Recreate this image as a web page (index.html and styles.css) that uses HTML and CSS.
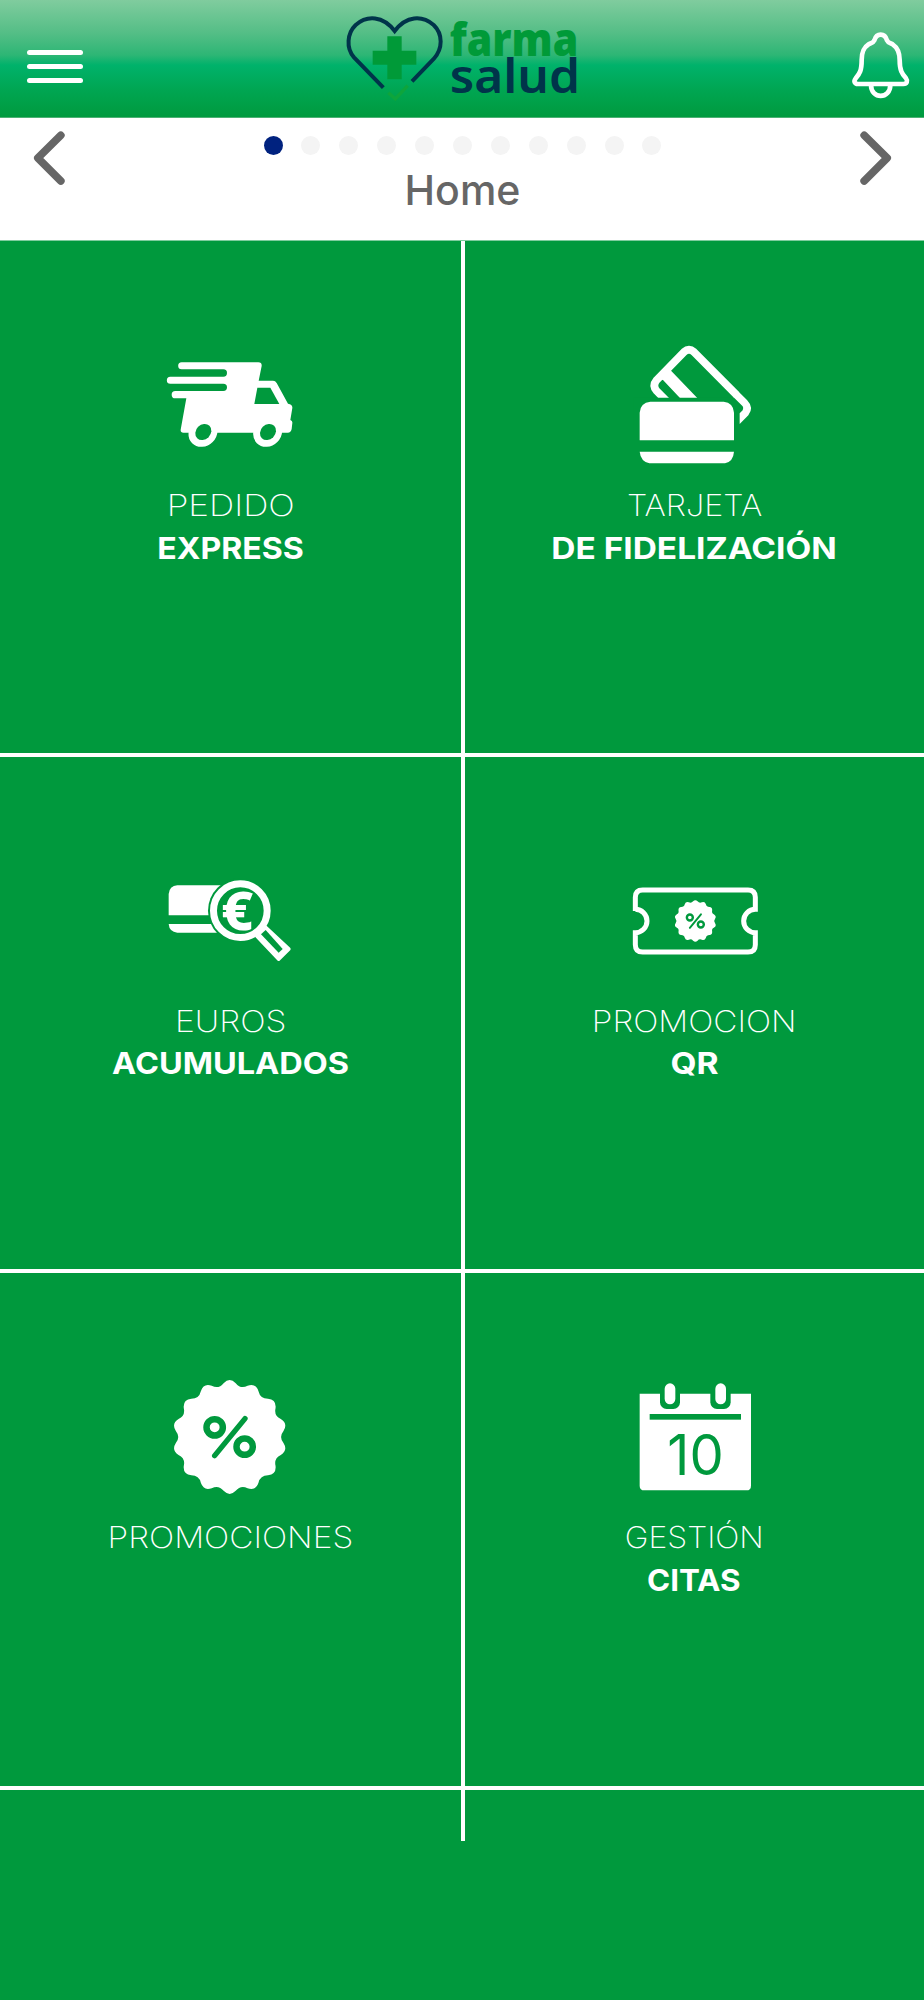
FILE: index.html
```html
<!DOCTYPE html>
<html lang="es">
<head>
    <meta charset="UTF-8">
    <meta name="viewport" content="width=device-width, initial-scale=1.0">
    <title>Farma Salud</title>
    <link rel="stylesheet" href="styles.css">
</head>
<body>
    <!-- Shared shapes -->
    <svg class="defs" width="0" height="0" aria-hidden="true">
        <symbol id="badge" viewBox="-180 -180 360 360">
            <path fill="#fff" d="M-18.2-161.5Q0-180 18.2-161.5Q32.7-143.3 53.7-153.4Q78.1-162.2 86.5-137.6Q91.7-114.9 114.9-114.9Q140.7-112.2 137.6-86.5Q132.4-63.8 153.4-53.7Q175.5-40.1 161.5-18.2Q147 0 161.5 18.2Q175.5 40.1 153.4 53.7Q132.4 63.8 137.6 86.5Q140.7 112.2 114.9 114.9Q91.7 114.9 86.5 137.6Q78.1 162.2 53.7 153.4Q32.7 143.3 18.2 161.5Q0 180-18.2 161.5Q-32.7 143.3-53.7 153.4Q-78.1 162.2-86.5 137.6Q-91.7 114.9-114.9 114.9Q-140.7 112.2-137.6 86.5Q-132.4 63.8-153.4 53.7Q-175.5 40.1-161.5 18.2Q-147 0-161.5-18.2Q-175.5-40.1-153.4-53.7Q-132.4-63.8-137.6-86.5Q-140.7-112.2-114.9-114.9Q-91.7-114.9-86.5-137.6Q-78.1-162.2-53.7-153.4Q-32.7-143.3-18.2-161.5Z"/>
            <g fill="none" stroke="#00993d" stroke-linecap="round">
                <circle cx="-45" cy="-29" r="24.5" stroke-width="19.5"/>
                <circle cx="45" cy="29" r="24.5" stroke-width="19.5"/>
                <path d="M46-55L-45 56" stroke-width="16"/>
            </g>
        </symbol>
    </svg>

    <header class="topbar">
        <button class="menu-btn" aria-label="Menú">
            <span></span>
            <span></span>
            <span></span>
        </button>
        <svg class="logo" viewBox="100 1 720 348">
            <path d="M221 264L133 173C108 145 113 100 138 76C172 46 220 48 255 94C290 48 337 46 372 76C400 103 400 147 372 178L307 245" fill="none" stroke="#00344a" stroke-width="12"/>
            <path d="M236 279L257 298L294 258" fill="none" stroke="#0ea53c" stroke-width="10"/>
            <path d="M233 110H276V153H320V195H276V239H233V195H189V153H233Z" fill="#009a38"/>
            <text class="logo-farma" x="420" y="170" textLength="386" lengthAdjust="spacingAndGlyphs">farma</text>
            <text class="logo-salud" x="420" y="279" textLength="391" lengthAdjust="spacingAndGlyphs">salud</text>
        </svg>
        <button class="bell-btn" aria-label="Notificaciones">
            <svg viewBox="710 90 180 210">
                <g fill="none" stroke="#fff" stroke-width="14" stroke-linejoin="round">
                    <path d="M799 104C787 104 783 111 780 121C777 128 770 129 763 133C746 144 742 158 742 180C742 211 736 222 724 235C717 244 721 252 731 252H867C878 252 881 243 875 235C863 221 856 211 856 180C856 158 851 144 835 133C828 129 821 128 818 121C815 111 811 104 799 104Z"/>
                    <path d="M770 254C770 299 828 299 828 254"/>
                </g>
            </svg>
        </button>
    </header>

    <nav class="pager">
        <button class="arrow" aria-label="Anterior">
            <svg viewBox="100 390 98 168"><path d="M183 406L114 474L183 543"/></svg>
        </button>
        <div class="pager-center">
            <div class="dots">
                <span class="dot active"></span>
                <span class="dot"></span>
                <span class="dot"></span>
                <span class="dot"></span>
                <span class="dot"></span>
                <span class="dot"></span>
                <span class="dot"></span>
                <span class="dot"></span>
                <span class="dot"></span>
                <span class="dot"></span>
                <span class="dot"></span>
            </div>
            <h1>Home</h1>
        </div>
        <button class="arrow" aria-label="Siguiente">
            <svg viewBox="736 390 98 168"><path d="M751 406L820 474L751 543"/></svg>
        </button>
    </nav>

    <main class="tiles">
        <a class="tile">
            <svg class="icon" viewBox="90 1 600 450">
                <path fill="#fff" d="M245 95H475Q486 95 485 106L476 150H519Q526 150 530 157L564 219Q578 221 577 232L571 268Q578 270 577 277L575 295Q573 306 563 306H250Q241 306 242 297L259 203H226A11 11 0 0 1 226 181H370A11 11 0 0 0 370 159H211A10.5 10.5 0 0 1 211 138H370A11 11 0 0 0 370 116H245A10.5 10.5 0 0 1 245 95Z"/>
                <path fill="#00993d" d="M472 171H511L538 220H463Z"/>
                <g fill="#fff">
                    <ellipse cx="309" cy="305" rx="46" ry="41" transform="rotate(-45 309 305)"/>
                    <ellipse cx="503" cy="305" rx="46" ry="41" transform="rotate(-45 503 305)"/>
                </g>
                <g fill="#00993d">
                    <ellipse cx="310" cy="304" rx="26" ry="22" transform="rotate(-45 310 304)"/>
                    <ellipse cx="504" cy="304" rx="26" ry="22" transform="rotate(-45 504 304)"/>
                </g>
            </svg>
            <span class="line-1 pedido">PEDIDO</span>
            <span class="line-2 express">EXPRESS</span>
        </a>

        <a class="tile">
            <svg class="icon" viewBox="162 1 600 450">
                <path fill="none" stroke="#fff" stroke-width="23" d="M385 216L350 181Q336 165 350 148L432 64Q447 51 462 64L590 193"/>
                <path fill="#fff" d="M355 145L386 113L474 204H422L369 148Z"/>
                <path fill="#00993d" d="M280 201H582V310H280Z"/>
                <path fill="#fff" d="M596 183L621 208Q643 231 625 254L599 280V248L608 239Q612 233 608 227L580 199Z"/>
                <path fill="#fff" d="M299 329V246Q301 216 331 213H551Q580 216 582 246V329Z"/>
                <path fill="#fff" d="M299 363H582Q580 392 555 398H328Q302 392 299 363Z"/>
            </svg>
            <span class="line-1 tarjeta">TARJETA</span>
            <span class="line-2 fidelizacion">DE FIDELIZACIÓN</span>
        </a>

        <a class="tile">
            <svg class="icon" viewBox="90 -39 600 450">
                <path fill="#fff" d="M206 166V102Q208 78 232 76H400V166Z"/>
                <path fill="#fff" d="M206 192H400V218H232Q208 216 206 192Z"/>
                <circle cx="421" cy="152" r="97" fill="#00993d"/>
                <path fill="#fff" stroke="#fff" stroke-width="10" stroke-linejoin="round" d="M470 228L497 202L567 267L536 298Z"/>
                <path fill="#00993d" d="M483 223L497 210L548 267L536 278Z"/>
                <circle cx="421" cy="152" r="80.5" fill="#00993d" stroke="#fff" stroke-width="21"/>
                <text class="euro" x="364" y="211" textLength="96" lengthAdjust="spacingAndGlyphs">€</text>
            </svg>
            <span class="line-1 euros">EUROS</span>
            <span class="line-2 acumulados">ACUMULADOS</span>
        </a>

        <a class="tile">
            <svg class="icon" viewBox="72 -39 600 450">
                <path fill="none" stroke="#fff" stroke-width="15" d="M196 153V112Q196 90 218 90H534Q556 90 556 112V148A35 35 0 0 0 556 218V254Q556 276 534 276H218Q196 276 196 254V218A35 35 0 0 0 196 148Z"/>
                <use href="#badge" x="310" y="117" width="132" height="132"/>
            </svg>
            <span class="line-1 promocion">PROMOCION</span>
            <span class="line-2 qr">QR</span>
        </a>

        <a class="tile">
            <svg class="icon" viewBox="120 9 600 450">
                <use href="#badge" x="239" y="51" width="360" height="360"/>
            </svg>
            <span class="line-1 promociones">PROMOCIONES</span>
        </a>

        <a class="tile">
            <svg class="icon" viewBox="-18 9 600 450">
                <path fill="#fff" d="M119 101H453V377Q453 391 439 391H133Q119 391 119 377Z"/>
                <g fill="#00993d">
                    <rect x="180" y="80" width="60" height="67" rx="20"/>
                    <rect x="331" y="80" width="61" height="67" rx="20"/>
                    <rect x="149" y="162" width="274" height="17"/>
                </g>
                <g fill="#fff">
                    <rect x="194" y="70" width="32" height="63" rx="16"/>
                    <rect x="346" y="70" width="32" height="63" rx="16"/>
                </g>
                <text class="day" x="202" y="345" textLength="169" lengthAdjust="spacingAndGlyphs">10</text>
            </svg>
            <span class="line-1 gestion">GESTIÓN</span>
            <span class="line-2 citas">CITAS</span>
        </a>

        <div class="tile"></div>
        <div class="tile"></div>
    </main>
</body>
</html>
```

FILE: styles.css
```css
* {
    margin: 0;
    padding: 0;
    box-sizing: border-box;
}

body {
    background: #00993d;
    font-family: Inter, "Liberation Sans", sans-serif;
    min-height: 2000px;
}

button {
    background: none;
    border: none;
    cursor: pointer;
}

svg {
    display: block;
}

.defs {
    position: absolute;
}

/* Top bar */
.topbar {
    display: flex;
    justify-content: space-between;
    align-items: flex-start;
    height: 118px;
    padding: 0 13px 0 27.4px;
    border-bottom: 1px solid #4db174;
    background: linear-gradient(#80cc9e 0, #54be86 33px, #2db675 55px, #00b26b 65px, #00a652 90px, #009a3e 117px);
}

.menu-btn {
    display: flex;
    flex-direction: column;
    gap: 8.7px;
    width: 55.5px;
    margin-top: 50px;
}

.menu-btn span {
    height: 5.2px;
    border-radius: 3px;
    background: #fff;
}

.logo {
    width: 240px;
    height: 116px;
    margin-left: -7px;
    overflow: visible;
}

.logo-farma {
    font: 900 138px "Noto Sans", sans-serif;
    fill: #009a38;
}

.logo-salud {
    font: 600 138px "Noto Sans", sans-serif;
    fill: #00344a;
}

.bell-btn {
    margin-top: 30px;
}

.bell-btn svg {
    width: 60px;
    height: 70px;
}

/* Pager */
.pager {
    display: flex;
    justify-content: space-between;
    align-items: flex-start;
    height: 122px;
    padding: 12px 32px 0 33px;
    background: #fff;
}

.arrow svg {
    width: 33px;
    height: 56px;
}

.arrow path {
    fill: none;
    stroke: #666;
    stroke-width: 23;
    stroke-linecap: round;
    stroke-linejoin: round;
}

.pager-center {
    display: flex;
    flex-direction: column;
    align-items: center;
    padding-top: 6px;
}

.dots {
    display: flex;
    gap: 18.9px;
}

.dot {
    width: 19px;
    height: 19px;
    border-radius: 50%;
    background: #f4f4f4;
}

.dot.active {
    background: #00227f;
}

.pager h1 {
    margin-top: 10px;
    color: #666;
    font-size: 41px;
    font-weight: 450;
    line-height: 50px;
}

/* Tiles, the white gap draws the separators */
.tiles {
    display: grid;
    grid-template-columns: 460.5px 1fr;
    grid-template-rows: 511.5px 512.5px 512.5px 51px;
    gap: 4px;
    border-top: 1px solid #7fcc9e;
    background: #fff;
}

.tile {
    display: flex;
    flex-direction: column;
    align-items: center;
    background: #00993d;
    color: #fff;
}

.icon {
    width: 200px;
    height: 150px;
    margin: 90px 0 3px;
}

.line-1,
.line-2 {
    font-size: 30px;
    line-height: 42.7px;
    white-space: nowrap;
}

.line-1 {
    font-weight: 200;
}

.line-2 {
    font-weight: 700;
}

/* Wide caps */
.pedido {
    transform: scaleX(1.17);
}

.express {
    transform: scaleX(1.07);
}

.tarjeta {
    transform: scaleX(1.08);
}

.fidelizacion {
    transform: scaleX(1.115);
}

.euros {
    transform: scaleX(1.12);
}

.acumulados {
    transform: scaleX(1.082);
}

.promocion {
    transform: scaleX(1.11);
}

.qr {
    transform: scaleX(1.12);
}

.promociones {
    transform: scaleX(1.113);
}

.gestion {
    transform: scaleX(1.065);
}

.citas {
    transform: scaleX(1.045);
}

.euro {
    font: 800 160px "Noto Sans", sans-serif;
    fill: #fff;
}

.day {
    font: 400 169px Inter, sans-serif;
    fill: #00993d;
}
```
